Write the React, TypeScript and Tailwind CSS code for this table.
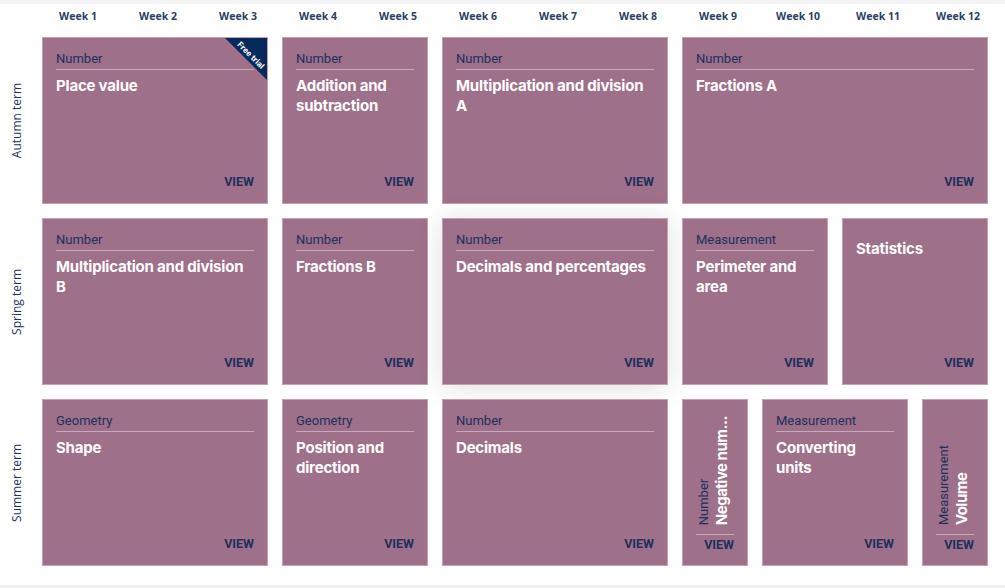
type Unit = {
  cat?: string;
  title: string;
  span: 1 | 2 | 3 | 4;
  trial?: boolean;
  shadow?: boolean;
};

type Term = { name: string; units: Unit[] };

const spanClass: Record<number, string> = {
  1: "col-span-1",
  2: "col-span-2",
  3: "col-span-3",
  4: "col-span-4",
};

const terms: Term[] = [
  {
    name: "Autumn term",
    units: [
      { cat: "Number", title: "Place value", span: 3, trial: true },
      { cat: "Number", title: "Addition and subtraction", span: 2 },
      { cat: "Number", title: "Multiplication and division A", span: 3 },
      { cat: "Number", title: "Fractions A", span: 4 },
    ],
  },
  {
    name: "Spring term",
    units: [
      { cat: "Number", title: "Multiplication and division B", span: 3 },
      { cat: "Number", title: "Fractions B", span: 2 },
      { cat: "Number", title: "Decimals and percentages", span: 3, shadow: true },
      { cat: "Measurement", title: "Perimeter and area", span: 2 },
      { title: "Statistics", span: 2 },
    ],
  },
  {
    name: "Summer term",
    units: [
      { cat: "Geometry", title: "Shape", span: 3 },
      { cat: "Geometry", title: "Position and direction", span: 2 },
      { cat: "Number", title: "Decimals", span: 3 },
      { cat: "Number", title: "Negative num...", span: 1 },
      { cat: "Measurement", title: "Converting units", span: 2 },
      { cat: "Measurement", title: "Volume", span: 1 },
    ],
  },
];

const weeks = Array.from({ length: 12 }, (_, i) => `Week ${i + 1}`);

const titleFont = "font-['Inter',sans-serif] text-[15px] font-bold tracking-[-0.2px] text-white";
const catFont = "font-['Roboto',sans-serif] text-[13px] leading-[16px] text-[#1c2f5e]";
const viewFont = "font-['Roboto',sans-serif] text-[12.5px] font-bold leading-[16px] text-[#1c2f5e]";

function UnitCard({ unit }: { unit: Unit }) {
  const base = `${spanClass[unit.span]} relative flex h-[167px] flex-col overflow-hidden border border-[#c3a1b3] bg-[#9f7089]`;

  if (unit.span === 1) {
    // narrow one-week unit: text runs up the card
    return (
      <div className={`${base} px-[13px] pb-[12px]`}>
        <div className="flex min-h-0 flex-1 items-end pb-[9px]">
          <div className="rotate-180 [writing-mode:vertical-rl]">
            <div className={`${catFont} block`}>{unit.cat}</div>
            <div className={`${titleFont} ml-[2px] block whitespace-nowrap leading-[20px] tracking-[-0.5px]`}>{unit.title}</div>
          </div>
        </div>
        <div className={`${viewFont} border-t border-[#c9a9ba] pt-[2px] text-right`}>VIEW</div>
      </div>
    );
  }

  return (
    <div className={`${base} px-[13px] pb-[13px] pt-[13px] ${unit.shadow ? "overflow-visible shadow-[0_2px_26px_rgba(0,0,0,0.13)]" : ""}`}>
      {unit.trial && (
        <div className="absolute right-0 top-0 h-[42px] w-[42px] overflow-hidden">
          <div className="absolute inset-0 bg-[#062a5c] [clip-path:polygon(0_0,100%_0,100%_100%)]" />
          <span className="absolute left-[6px] top-[12px] w-[40px] rotate-45 text-center font-['Inter',sans-serif] text-[8px] font-bold leading-[10px] text-white">
            Free trial
          </span>
        </div>
      )}
      {unit.cat && <div className={`${catFont} border-b border-[#c9a9ba] pb-[2px]`}>{unit.cat}</div>}
      <div className={`${unit.cat ? "mt-[6px]" : "mt-[7px]"} ${titleFont} leading-[20px]`}>{unit.title}</div>
      <div className={`${viewFont} mt-auto text-right`}>VIEW</div>
    </div>
  );
}

export default function App() {
  return (
    <div className="flex h-[588px] w-[1005px] flex-col overflow-hidden bg-white">
      <div className="h-[4px] bg-[#f3f3f3]" />
      <div className="grid grid-cols-[28px_repeat(12,66px)] gap-x-[14px] pt-[4px]">
        <div />
        {weeks.map((w) => (
          <div
            key={w}
            className="pl-[6px] text-center font-['Open_Sans',sans-serif] text-[10.5px] font-bold leading-[16px] text-[#2b3f66]"
          >
            {w}
          </div>
        ))}
      </div>
      <div className="mt-[13px] flex flex-col gap-y-[14px]">
        {terms.map((term) => (
          <div key={term.name} className="grid grid-cols-[28px_repeat(12,66px)] gap-x-[14px]">
            <div className="flex items-center justify-center pl-[5px]">
              <span className="rotate-180 whitespace-nowrap font-['Open_Sans',sans-serif] text-[12px] leading-[16px] text-[#1c3366] [writing-mode:vertical-rl]">
                {term.name}
              </span>
            </div>
            {term.units.map((u) => (
              <UnitCard key={u.title} unit={u} />
            ))}
          </div>
        ))}
      </div>
      <div className="mt-auto h-[3px] bg-[#efefef]" />
    </div>
  );
}
